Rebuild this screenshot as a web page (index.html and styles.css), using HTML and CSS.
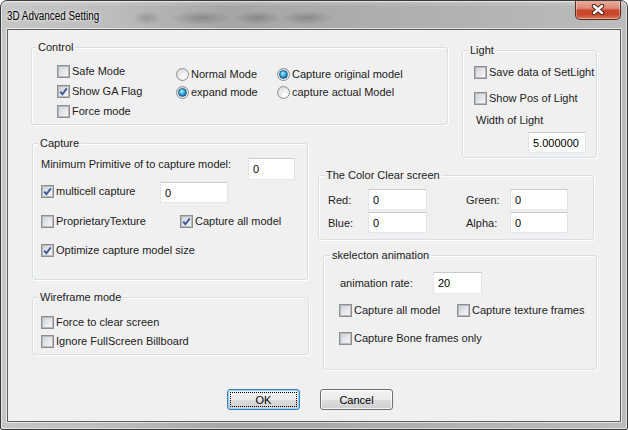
FILE: index.html
```html
<!DOCTYPE html>
<html>
<head>
<meta charset="utf-8">
<title>3D Advanced Setting</title>
<link rel="stylesheet" href="styles.css">
</head>
<body>
<div class="window">
  <div class="titlebar">
    <span class="title">3D Advanced Setting</span>
    <div class="close">
      <svg width="14" height="11" viewBox="0 0 14 11">
        <path d="M3 2 L11 9 M11 2 L3 9" stroke="#4b2117" stroke-width="4.4" stroke-linecap="round" fill="none"/>
        <path d="M3 2 L11 9 M11 2 L3 9" stroke="#ffffff" stroke-width="2.4" stroke-linecap="round" fill="none"/>
      </svg>
    </div>
  </div>
  <div class="client">
    <div class="layout">
      <div class="group g-control">
        <span class="legend">Control</span>
        <div class="col col-a">
          <label class="cb-row"><span class="box"></span><span>Safe Mode</span></label>
          <label class="cb-row"><span class="box"><svg viewBox="0 0 11 11" width="11" height="11"><path d="M2.2 5.6 L4.4 8.2 L8.8 2.4" stroke="#3d5a98" stroke-width="1.9" fill="none"/></svg></span><span>Show GA Flag</span></label>
          <label class="cb-row"><span class="box"></span><span>Force mode</span></label>
        </div>
        <div class="col col-b">
          <label class="cb-row"><span class="radio"></span><span>Normal Mode</span></label>
          <label class="cb-row"><span class="radio on"></span><span>expand mode</span></label>
        </div>
        <div class="col col-b">
          <label class="cb-row"><span class="radio on"></span><span>Capture original model</span></label>
          <label class="cb-row"><span class="radio"></span><span>capture actual Model</span></label>
        </div>
      </div>

      <div class="group g-light">
        <span class="legend">Light</span>
        <label class="cb-row"><span class="box"></span><span>Save data of SetLight</span></label>
        <label class="cb-row l-row2"><span class="box"></span><span>Show Pos of Light</span></label>
        <span class="l-label">Width of Light</span>
        <div class="edit l-edit">5.000000</div>
      </div>

      <div class="stack left-stack">
        <div class="group g-capture">
          <span class="legend">Capture</span>
          <div class="c-row1">
            <span class="c-label">Minimum Primitive of to capture model:</span>
            <div class="edit c-edit1">0</div>
          </div>
          <div class="c-row2">
            <label class="cb-row c-multi"><span class="box"><svg viewBox="0 0 11 11" width="11" height="11"><path d="M2.2 5.6 L4.4 8.2 L8.8 2.4" stroke="#3d5a98" stroke-width="1.9" fill="none"/></svg></span><span>multicell capture</span></label>
            <div class="edit c-edit2">0</div>
          </div>
          <div class="c-row3">
            <label class="cb-row c-prop"><span class="box"></span><span>ProprietaryTexture</span></label>
            <label class="cb-row"><span class="box"><svg viewBox="0 0 11 11" width="11" height="11"><path d="M2.2 5.6 L4.4 8.2 L8.8 2.4" stroke="#3d5a98" stroke-width="1.9" fill="none"/></svg></span><span>Capture all model</span></label>
          </div>
          <label class="cb-row c-row4"><span class="box"><svg viewBox="0 0 11 11" width="11" height="11"><path d="M2.2 5.6 L4.4 8.2 L8.8 2.4" stroke="#3d5a98" stroke-width="1.9" fill="none"/></svg></span><span>Optimize capture model size</span></label>
        </div>

        <div class="group g-wire">
          <span class="legend">Wireframe mode</span>
          <label class="cb-row"><span class="box"></span><span>Force to clear screen</span></label>
          <label class="cb-row w-row2"><span class="box"></span><span>Ignore FullScreen Billboard</span></label>
        </div>
      </div>

      <div class="stack right-stack">
        <div class="group g-color">
          <span class="legend">The Color Clear screen</span>
          <div class="k-row">
            <span class="k-label">Red:</span>
            <div class="edit k-edit1">0</div>
            <span class="k-label2">Green:</span>
            <div class="edit k-edit2">0</div>
          </div>
          <div class="k-row k-row2">
            <span class="k-label">Blue:</span>
            <div class="edit k-edit1">0</div>
            <span class="k-label2">Alpha:</span>
            <div class="edit k-edit2">0</div>
          </div>
        </div>

        <div class="group g-skel">
          <span class="legend">skelecton animation</span>
          <div class="s-row1">
            <span class="s-label">animation rate:</span>
            <div class="edit s-edit">20</div>
          </div>
          <div class="s-row2">
            <label class="cb-row s-first"><span class="box"></span><span>Capture all model</span></label>
            <label class="cb-row"><span class="box"></span><span>Capture texture frames</span></label>
          </div>
          <label class="cb-row s-row3"><span class="box"></span><span>Capture Bone frames only</span></label>
        </div>
      </div>
    </div>

    <div class="buttons">
      <button class="btn btn-default" type="button">OK</button>
      <button class="btn" type="button">Cancel</button>
    </div>
  </div>
</div>
</body>
</html>
```

FILE: styles.css
```css
* {
  box-sizing: border-box;
}

html,
body {
  margin: 0;
  padding: 0;
}

body {
  width: 628px;
  height: 430px;
  overflow: hidden;
  background: #ffffff;
  font-family: "Liberation Sans", Arial, sans-serif;
  font-size: 11px;
  color: #222222;
}

/* ---------- window chrome ---------- */
.window {
  width: 628px;
  height: 430px;
  border: 1px solid #3a3a3a;
  border-radius: 7px 7px 2px 2px;
  background: linear-gradient(to right, #c6c6c6 0%, #bcbcbc 18%, #a6a6a6 36%, #acacac 56%, #b4b4b4 80%, #bcbcbc 100%);
  box-shadow: inset 0 0 0 1px rgba(255, 255, 255, 0.55);
  display: flex;
  flex-direction: column;
  overflow: hidden;
}

.titlebar {
  height: 28px;
  flex: none;
  display: flex;
  align-items: flex-start;
  padding-left: 6px;
  background:
    radial-gradient(ellipse 14px 7px at 146px 17px, rgba(70, 70, 70, 0.28), rgba(70, 70, 70, 0) 100%),
    radial-gradient(ellipse 30px 7px at 200px 17px, rgba(70, 70, 70, 0.32), rgba(70, 70, 70, 0) 100%),
    radial-gradient(ellipse 24px 7px at 257px 17px, rgba(70, 70, 70, 0.32), rgba(70, 70, 70, 0) 100%),
    radial-gradient(ellipse 26px 7px at 306px 17px, rgba(70, 70, 70, 0.32), rgba(70, 70, 70, 0) 100%),
    linear-gradient(to bottom, rgba(255, 255, 255, 0.25) 0px, rgba(255, 255, 255, 0) 6px);
}

.title {
  display: inline-block;
  font-family: "Liberation Sans", Arial, sans-serif;
  font-size: 12.5px;
  line-height: 14px;
  margin-top: 8px;
  color: #000000;
  white-space: nowrap;
  transform: scaleX(0.79);
  transform-origin: 0 50%;
  text-shadow: 0 0 6px rgba(255, 255, 255, 0.9), 0 0 3px rgba(255, 255, 255, 0.7);
}

.close {
  margin-left: auto;
  margin-right: 6px;
  margin-top: -1px;
  width: 46px;
  height: 20px;
  border: 1px solid #5a2b22;
  border-top: none;
  border-radius: 0 0 5px 5px;
  background: linear-gradient(to bottom, #eab1a3 0%, #dd8a76 42%, #c9482d 55%, #c9482d 78%, #dc7a5f 100%);
  box-shadow: inset 0 0 0 1px rgba(255, 255, 255, 0.35);
  display: grid;
  place-items: center;
}

.client {
  margin: 0 6px;
  height: 393px;
  flex: none;
  border: 1px solid #5e5e5e;
  background: #f0f0f0;
  box-shadow: 0 0 0 1px rgba(255, 255, 255, 0.6);
  padding: 17px 0 0 23px;
  display: flex;
  flex-direction: column;
}

/* ---------- dialog layout ---------- */
.layout {
  display: grid;
  grid-template-columns: 278px 9px 130px 14px 135px;
  grid-template-rows: 96px 32px auto;
}

.group {
  position: relative;
  border: 1px solid #d5dfe5;
  border-radius: 3px;
  box-shadow: inset 1px 1px 0 #ffffff, 1px 1px 0 #ffffff;
}

.legend {
  position: absolute;
  top: -7px;
  left: 5px;
  padding: 0 2px;
  line-height: 13px;
  background: #f0f0f0;
  white-space: nowrap;
}

.g-control .legend {
  left: 4px;
}

.g-skel .legend {
  left: 6px;
}

.stack {
  display: flex;
  flex-direction: column;
}

/* ---------- controls ---------- */
.cb-row {
  display: flex;
  align-items: center;
  gap: 2px;
  height: 13px;
  line-height: 13px;
  white-space: nowrap;
}

.box {
  width: 13px;
  height: 13px;
  flex: none;
  border: 1px solid #8e8f8f;
  background: #f6f6f6;
  display: grid;
  place-items: center;
}

.box::before {
  content: "";
  grid-area: 1 / 1;
  width: 9px;
  height: 9px;
  border: 1px solid #b6bac0;
  background: linear-gradient(135deg, #cdd1d7 0%, #e6e8eb 55%, #f7f7f8 100%);
}

.box svg {
  grid-area: 1 / 1;
}

.radio {
  width: 13px;
  height: 13px;
  flex: none;
  border: 1px solid #8e8f8f;
  border-radius: 50%;
  background: radial-gradient(circle at 65% 70%, #ffffff 0%, #f0f0f0 35%, #cfd2d6 100%);
  display: grid;
  place-items: center;
}

.radio.on::before {
  content: "";
  width: 7px;
  height: 7px;
  border-radius: 50%;
  border: 1px solid #1c5a86;
  background: radial-gradient(circle at 40% 35%, #b8ecff 0%, #3fb0e4 40%, #0d6aa3 80%, #0a4e7c 100%);
}

.edit {
  background: #ffffff;
  border: 1px solid;
  border-color: #c8cbd0 #e2e3ea #e3e9ef #e2e3ea;
  padding-left: 4px;
  display: flex;
  align-items: center;
  flex: none;
  color: #000000;
}

/* ---------- Control group ---------- */
.g-control {
  grid-column: 1 / 4;
  grid-row: 1;
  align-self: start;
  height: 78px;
  display: flex;
  align-items: flex-start;
  padding-left: 25px;
}

.col {
  display: flex;
  flex-direction: column;
}

.col-a {
  width: 119px;
  margin-top: 17px;
  gap: 7px;
}

.col-b {
  width: 101px;
  margin-top: 20px;
  gap: 5px;
}

/* ---------- Light group ---------- */
.g-light {
  grid-column: 5;
  grid-row: 1 / 3;
  align-self: start;
  margin-top: 3px;
  height: 108px;
  display: flex;
  flex-direction: column;
  align-items: flex-start;
  padding: 15px 0 0 11px;
}

.l-row2 {
  margin-top: 13px;
}

.l-label {
  margin-top: 9px;
  margin-left: 2px;
  line-height: 13px;
}

.l-edit {
  margin-top: 5px;
  margin-left: 54px;
  width: 58px;
  height: 21px;
}

/* ---------- left stack ---------- */
.left-stack {
  grid-column: 1;
  grid-row: 2 / 4;
  gap: 17px;
  margin-left: 1px;
}

.g-capture {
  width: 276px;
  height: 137px;
  padding: 14px 0 0 8px;
}

.c-row1 {
  display: flex;
  align-items: flex-start;
}

.c-label {
  width: 207px;
  line-height: 13px;
  white-space: nowrap;
}

.c-edit1 {
  width: 47px;
  height: 22px;
}

.c-row2 {
  margin-top: 2px;
  display: flex;
  align-items: flex-start;
}

.c-multi {
  width: 119px;
  margin-top: 3px;
}

.c-edit2 {
  width: 68px;
  height: 21px;
}

.c-row3 {
  margin-top: 12px;
  display: flex;
}

.c-prop {
  width: 139px;
}

.c-row4 {
  margin-top: 16px;
}

.g-wire {
  width: 277px;
  height: 58px;
  padding: 18px 0 0 8px;
}

.w-row2 {
  margin-top: 6px;
}

/* ---------- right stack ---------- */
.right-stack {
  grid-column: 3 / 6;
  grid-row: 3;
  gap: 15px;
}

.g-color {
  width: 276px;
  height: 65px;
  padding: 13px 0 0 9px;
}

.k-row {
  display: flex;
  align-items: center;
  height: 21px;
}

.k-row2 {
  margin-top: 2px;
}

.k-label {
  width: 40px;
}

.k-label2 {
  width: 44px;
  margin-left: 39px;
}

.k-edit1 {
  width: 59px;
  height: 21px;
}

.k-edit2 {
  width: 58px;
  height: 21px;
}

.g-skel {
  width: 274px;
  height: 115px;
  margin-left: 5px;
  padding: 16px 0 0 15px;
}

.s-row1 {
  display: flex;
  align-items: center;
}

.s-label {
  width: 93px;
  margin-left: 1px;
}

.s-edit {
  width: 49px;
  height: 22px;
}

.s-row2 {
  margin-top: 10px;
  display: flex;
}

.s-first {
  width: 118px;
}

.s-row3 {
  margin-top: 15px;
}

/* ---------- buttons ---------- */
.buttons {
  display: flex;
  gap: 20px;
  margin-top: 19px;
  padding-left: 196px;
}

.btn {
  width: 73px;
  height: 21px;
  padding: 0;
  margin: 0;
  font-family: "Liberation Sans", Arial, sans-serif;
  font-size: 11px;
  color: #000000;
  border: 1px solid #707070;
  border-radius: 3px;
  background: linear-gradient(to bottom, #f2f2f2 0%, #ebebeb 50%, #dddddd 51%, #cfcfcf 100%);
  box-shadow: inset 0 0 0 1px rgba(255, 255, 255, 0.75);
}

.btn-default {
  border-color: #3c7fb1;
  box-shadow: inset 0 0 0 1px #8fd6f8;
  outline: 1px dotted #000000;
  outline-offset: -4px;
}
```
